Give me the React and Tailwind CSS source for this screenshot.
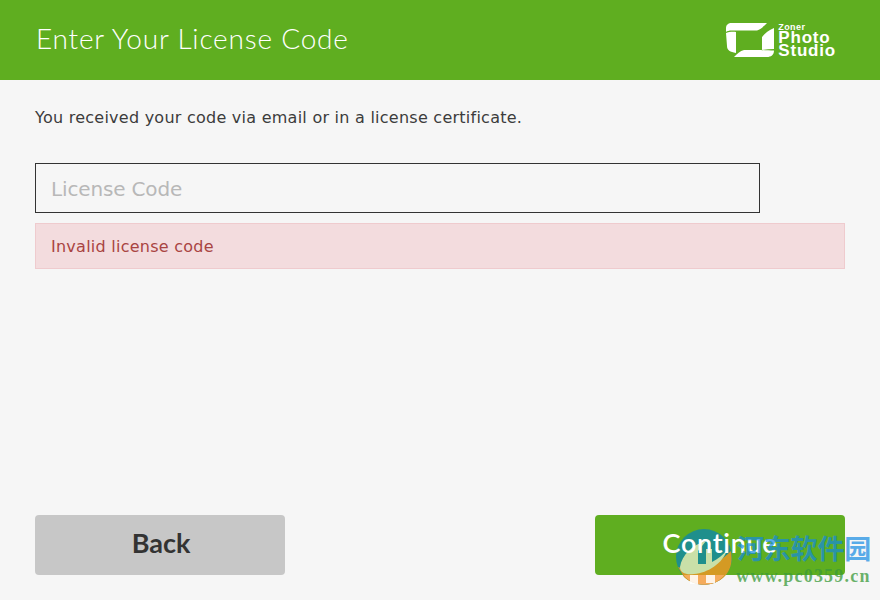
import React from 'react';

const Logo = () => (
  <div className="flex items-center gap-1">
    <svg width="48" height="35" viewBox="0 0 48 35" fill="#ffffff">
      <path d="M6 0 H41 C38 3 35 6 31 7.5 H6 C3 7.5 1 8 0 9 V5 C0 2 2 0 6 0 Z" />
      <path d="M0 10 C2 9 7 8.5 10 9 V30 C4 29 1 27 1 23 Z" />
      <path d="M36 14 C39 10 43 7 48 5 V26 C44 26 40 26.5 36 27 Z" />
      <path d="M48 27.5 C48 32 45 34 41 34 H8 C11 31 14 28 18 27 H35 C40 27.5 44 27.5 48 27.5 Z" />
    </svg>
    <div className="flex flex-col font-['Liberation_Sans',sans-serif] font-bold text-white leading-none">
      <span className="text-[9px] h-[8px] leading-[8px] tracking-[0.4px]">Zoner</span>
      <span className="text-[17px] h-[13px] leading-[13px] tracking-[0.8px]">Photo</span>
      <span className="text-[17px] h-[13px] leading-[13px] tracking-[0.8px]">Studio</span>
    </div>
  </div>
);

const Watermark = () => (
  <div className="absolute left-[676px] top-[529px] flex items-start">
    <svg width="56" height="56" viewBox="0 0 56 56">
      <circle cx="28" cy="28" r="28" fill="#1f8f8c" />
      <path d="M2 38 C20 44 42 36 55 22 C57 34 54 42 48 48 C38 58 18 58 8 48 Z" fill="#d49a24" />
      <path d="M7.5 46 H48.5 C38 59 18 59 7.5 46 Z" fill="#f5ab5c" />
      <path d="M14 46 H22 V55 H14 Z M30 46 H39 V54 H30 Z" fill="#ffffff" fillOpacity="0.85" />
      <path d="M4 38 C6 26 16 16 30 12 L22 22 V35 H30 V20 H36 V33 C42 30 47 26 51 21 C47 34 32 44 18 45 C10 46 4 44 4 38 Z" fill="#c9e0a8" />
    </svg>
    <div className="relative z-20 flex flex-col ml-[5px]">
      <span className="font-['Noto_Sans_CJK_SC',serif] font-bold text-[27px] leading-[36px] text-[#1389e2]/70 tracking-[-0.2px] mt-[1px]">
        河东软件园
      </span>
      <span className="font-['Liberation_Serif',serif] font-bold text-[18px] leading-[20px] text-[#3a9a3a]/75 tracking-[1.2px] -ml-[1px]">www.pc0359.cn</span>
    </div>
  </div>
);

export default function App() {
  return (
    <div className="relative w-[880px] h-[600px] overflow-hidden bg-[#f6f6f6] flex flex-col font-['DejaVu_Sans',sans-serif]">
      <header className="h-20 bg-[#5fae20] flex items-center justify-between pl-[36px] pr-[44px]">
        <h1 className="font-['Lato',sans-serif] font-light text-[28px] text-white tracking-[0.8px] pb-1">Enter Your License Code</h1>
        <Logo />
      </header>

      <main className="flex-1 flex flex-col px-[35px] pb-[25px]">
        <p className="mt-[28px] text-[16px] leading-5 tracking-[0.25px] text-[#3c3c3c]">You received your code via email or in a license certificate.</p>

        <input
          placeholder="License Code"
          readOnly
          className="mt-[35px] w-[725px] h-[50px] px-[15px] pt-[2px] border border-[#333333] bg-transparent text-[20px] tracking-[-0.15px] outline-none placeholder:text-[#b8b8b8]"
        />
        <div className="mt-[10px] h-[46px] flex items-center px-[15px] pt-[2px] bg-[#f3dcde] border border-[#efcbce] text-[16px] tracking-[0.25px] text-[#a94442]">
          Invalid license code
        </div>

        <div className="mt-auto flex justify-between">
          <button className="w-[250px] h-[60px] pb-1 pl-[2px] rounded bg-[#c7c7c7] text-[#333333] font-['Lato',sans-serif] font-bold text-[27px]">Back</button>
          <button className="w-[250px] h-[60px] pb-1 rounded bg-[#5fae20] text-white font-['Lato',sans-serif] font-semibold text-[27px] tracking-[0.7px]">
            <span className="relative z-10">Continue</span>
          </button>
        </div>
      </main>
      <Watermark />
    </div>
  );
}
